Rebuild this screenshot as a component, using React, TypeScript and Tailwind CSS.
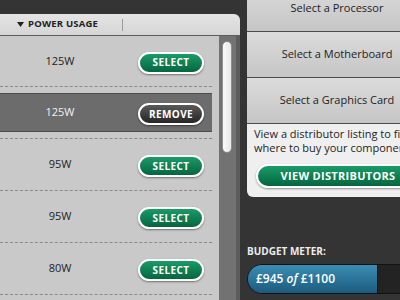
import React from 'react'

type Row = {
    watts: string;
    selected?: boolean;
}

const rows: Row[] = [
    { watts: '125W' },
    { watts: '125W', selected: true },
    { watts: '95W' },
    { watts: '95W' },
    { watts: '80W' },
];

const parts = ['Select a Processor', 'Select a Motherboard', 'Select a Graphics Card'];

const PillButton: React.FC<{ label: string; dark?: boolean }> = ({ label, dark }) => (
    <button
        className={`w-[66px] h-[22px] rounded-full border-2 border-white text-white text-[10px] font-bold tracking-[0.4px] shadow-[0_1px_2px_rgba(0,0,0,0.45)] ${dark ? 'bg-gradient-to-b from-[#5a5a5a] to-[#262626]' : 'bg-gradient-to-b from-[#1b9b69] to-[#05663f]'}`}
    >
        {label}
    </button>
)

const PowerRow: React.FC<{ row: Row; first: boolean }> = ({ row, first }) => (
    <div className={`${first ? 'h-[51px]' : 'h-[52px]'} border-b border-dashed border-[#8a8a8a] flex flex-col ${row.selected ? 'py-[6px]' : ''}`}>
        <div className={`flex-1 flex items-center ${row.selected ? 'bg-[#6c6c6c] border-y border-[#4a4a4a]' : ''}`}>
            <span className={`w-[90px] ml-[15px] text-center text-[11px] ${row.selected ? 'text-[#f2f2f2]' : 'text-[#222]'}`}>
                {row.watts}
            </span>
            <div className="flex-1"></div>
            <div className="mr-[8px]">
                {row.selected ? <PillButton label="REMOVE" dark /> : <PillButton label="SELECT" />}
            </div>
        </div>
    </div>
)

export default function App() {
    return (
        <div className="w-[400px] h-[300px] bg-[#343434] overflow-hidden flex font-['Open_Sans',sans-serif]">
            {/* power usage list */}
            <div className="w-[240px] shrink-0 mt-[14px] flex flex-col">
                <div className="h-[22px] shrink-0 bg-gradient-to-b from-[#e4e4e4] to-[#d6d6d6] rounded-tr-[6px] border-b border-[#5c5c5c] flex items-center">
                    <svg className="ml-[17px]" width="7" height="5" viewBox="0 0 7 5">
                        <path d="M0 0 L7 0 L3.5 5 Z" fill="#222" />
                    </svg>
                    <span className="ml-[4px] text-[9.5px] font-bold text-[#222] tracking-[0.2px]">POWER USAGE</span>
                    <span className="ml-[24px] w-px h-[12px] bg-[#9a9a9a]"></span>
                </div>
                <div className="flex flex-1 bg-[#c9c9c9]">
                    <div className="w-[212px] flex flex-col">
                        {rows.map((r, i) => <PowerRow key={i} row={r} first={i === 0} />)}
                    </div>
                    <div className="w-[7px]"></div>
                    <div className="w-[17px] bg-[#727272] pt-[5px] pl-[3px]">
                        <div className="w-[10px] h-[112px] rounded-full bg-gradient-to-r from-[#fafafa] to-[#e8e8e8] border border-[#8d8d8d]"></div>
                    </div>
                    <div className="w-[4px] bg-[#5c5c5c]"></div>
                </div>
            </div>

            {/* right column */}
            <div className="w-[180px] shrink-0 ml-[7px] flex flex-col">
                <div className="-mt-[14px]">
                    {parts.map(p => (
                        <div key={p} className="h-[46px] border-b border-[#4c4c4c] bg-gradient-to-b from-[#dcdcdc] to-[#c5c5c5] flex items-center justify-center text-[11px] text-[#222]">
                            {p}
                        </div>
                    ))}
                </div>
                <div className="bg-[#efefef] rounded-bl-[6px] px-[7px] pt-[3px] pb-[9px]">
                    <p className="text-[11px] leading-[14px] text-[#1e1e1e] whitespace-nowrap">
                        View a distributor listing to find<br />where to buy your components
                    </p>
                    <button className="mt-[9px] ml-[2px] w-[164px] h-[24px] rounded-full border-2 border-white bg-gradient-to-b from-[#1b9b69] to-[#05663f] text-white text-[11px] font-bold tracking-[0.3px] shadow-[0_1px_2px_rgba(0,0,0,0.4)]">
                        VIEW DISTRIBUTORS
                    </button>
                </div>

                <div className="mt-[48px] text-[10px] leading-[12px] font-bold text-[#ececec]">BUDGET METER:</div>
                <div className="mt-[7px] h-[30px] flex rounded-l-full border border-[#121212] overflow-hidden">
                    <div className="w-[129px] bg-gradient-to-b from-[#3b8db6] to-[#1b5c7e] flex items-center pl-[8px] text-[12px] font-semibold text-white">
                        £945&nbsp;<i>of</i>&nbsp;£1100
                    </div>
                    <div className="flex-1 bg-[#232323] border-l border-[#121212]"></div>
                </div>
            </div>
        </div>
    )
}
